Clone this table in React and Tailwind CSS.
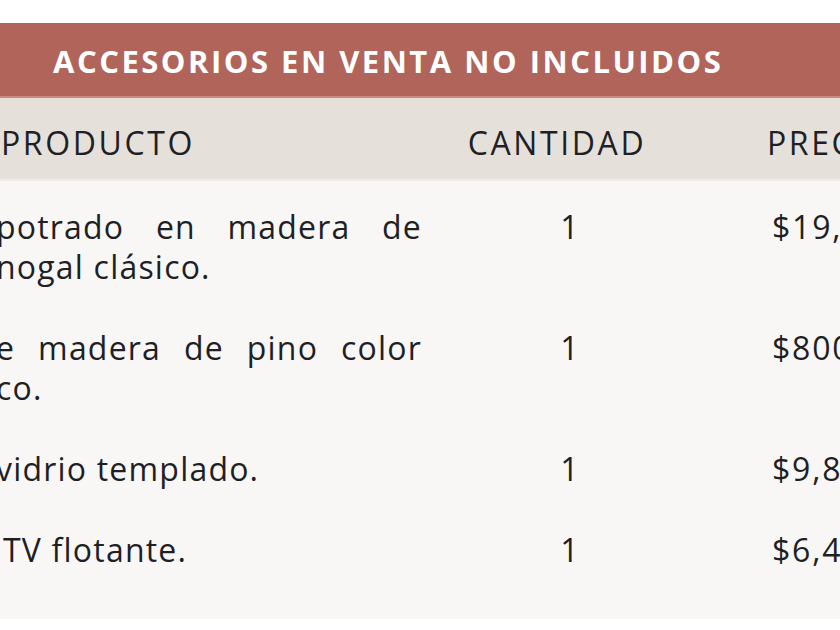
const rows = [
  { lines: ['potrado en madera de', 'nogal clásico.'], qty: '1', price: '$19,800.00' },
  { lines: ['e madera de pino color', 'co.'], qty: '1', price: '$800.00' },
  { lines: ['vidrio templado.'], qty: '1', price: '$9,800.00' },
  { lines: ['TV flotante.'], qty: '1', price: '$6,400.00', indent: true },
];

const ProductLines = ({ lines, indent }) => (
  <div className={indent ? 'pl-[7px]' : ''}>
    {lines.map((line, i) => (
      <div
        key={i}
        className={i < lines.length - 1 ? 'text-justify [text-align-last:justify]' : ''}
      >
        {line}
      </div>
    ))}
  </div>
);

export default function App() {
  return (
    <div className="w-[840px] h-[630px] overflow-hidden bg-white font-['Open_Sans',sans-serif] text-[#1f1f26]">
      <div className="h-[23px]" />

      {/* title band */}
      <div className="h-[75px] bg-[#b0645a] border-b-2 border-[#c98a80] flex items-center pl-[53px] pt-[4px]">
        <h2 className="text-[31px] font-bold text-white tracking-[2.5px] whitespace-nowrap">
          ACCESORIOS EN VENTA NO INCLUIDOS
        </h2>
      </div>

      {/* column headers */}
      <div className="h-[83px] bg-[#e5e1da] border-b-2 border-[#efece7] grid grid-cols-[426px_240px_1fr] gap-x-[15px] items-center -ml-1 pt-[9px] text-[32px] tracking-[2.6px] whitespace-nowrap">
        <div className="pl-[5px]">PRODUCTO</div>
        <div className="text-center">CANTIDAD</div>
        <div className="pl-[75px]">PRECIO</div>
      </div>

      {/* body */}
      <div className="bg-[#f8f7f5] pb-[34px] text-[32px] leading-[40px] tracking-[1.2px]">
        {rows.map((row, i) => (
          <div
            key={i}
            className="grid grid-cols-[426px_240px_1fr] gap-x-[15px] items-start -ml-1 pt-[26px] pb-[15px] whitespace-nowrap"
          >
            <ProductLines lines={row.lines} indent={row.indent} />
            <div className="text-center pl-[26px]">{row.qty}</div>
            <div className="pl-[80px] tracking-[1.8px]">{row.price}</div>
          </div>
        ))}
      </div>
    </div>
  );
}
